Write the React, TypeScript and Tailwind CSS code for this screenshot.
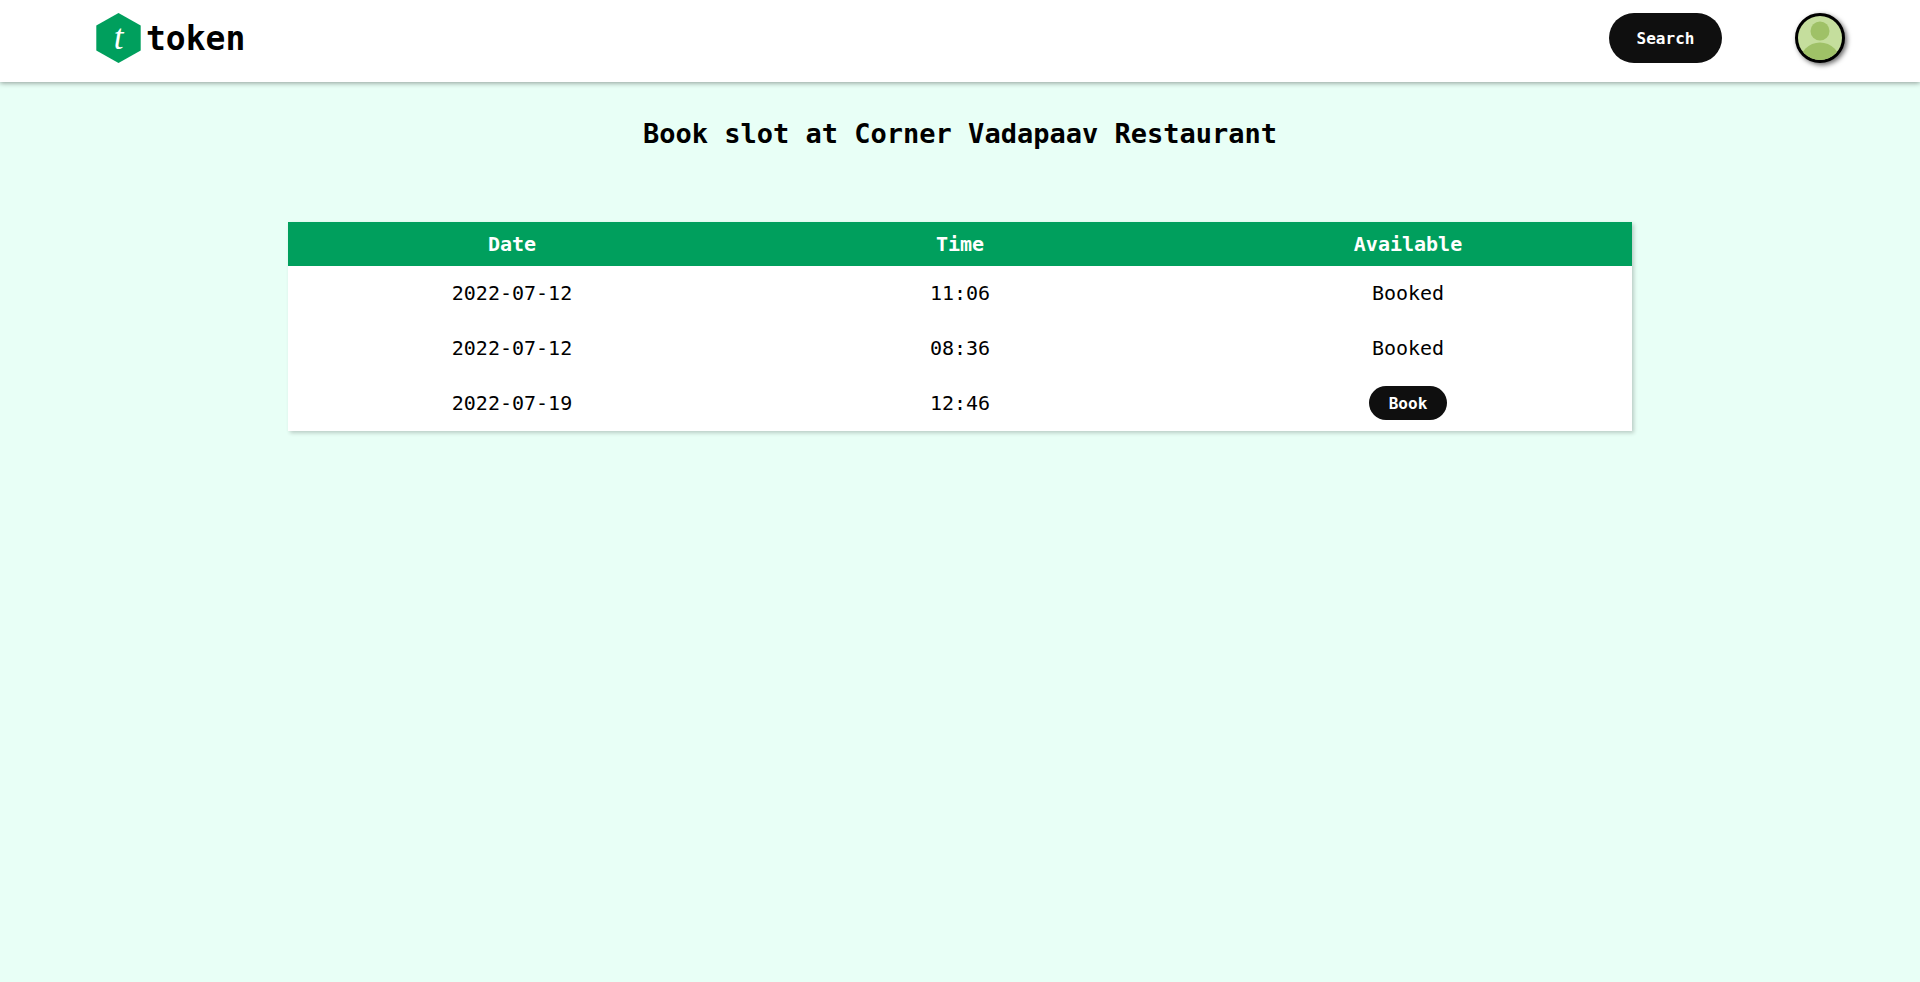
const slots = [
  { date: "2022-07-12", time: "11:06", available: false },
  { date: "2022-07-12", time: "08:36", available: false },
  { date: "2022-07-19", time: "12:46", available: true },
];

function Logo() {
  return (
    <a href="#" aria-label="token" className="flex items-center gap-1 text-black">
      <svg viewBox="0 0 46 50" className="h-[50px] w-[46px]" aria-hidden="true">
        <path d="M22.500 0 44.700 12.500v25L22.500 50 .3 37.500v-25Z" fill="#009f5d" />
        <text
          x="22.500"
          y="36"
          textAnchor="middle"
          fontSize="35"
          fontStyle="italic"
          fontFamily="Liberation Serif, serif"
          fill="#fff"
        >
          t
        </text>
      </svg>
      <span className="pt-0.5 text-[33px] leading-12 font-bold">token</span>
    </a>
  );
}

function Avatar() {
  return (
    <button
      type="button"
      aria-label="Profile"
      className="size-[50px] rounded-full border-3 border-black bg-black shadow-[2px_2px_5px_rgba(0,0,0,0.6)]"
    >
      <svg viewBox="0 0 44 44" className="size-full rounded-full" aria-hidden="true">
        <rect width="44" height="44" fill="#c5de9d" />
        <circle cx="22" cy="15" r="9.5" fill="#9fc167" />
        <circle cx="22" cy="47" r="20.5" fill="#9fc167" />
      </svg>
    </button>
  );
}

export default function App() {
  return (
    <div className="min-h-screen bg-[#e8fff6] font-['DejaVu_Sans_Mono',monospace] text-black">
      <header className="flex items-start justify-between bg-white pt-[13px] pr-[75px] pb-[19px] pl-24 shadow-[0_1px_5px_rgba(0,0,0,0.4)]">
        <Logo />
        <nav className="flex items-center gap-[73px]">
          <button type="button" className="h-[50px] w-[113px] rounded-full bg-[#0f0f0f] pt-0.5 text-base font-bold text-white">
            Search
          </button>
          <Avatar />
        </nav>
      </header>
      <main className="flex flex-col items-center pt-8">
        <h1 className="text-[27px] leading-10 font-bold">Book slot at Corner Vadapaav Restaurant</h1>
        <table className="mt-[68px] w-[70%] table-fixed bg-white text-center text-xl shadow-[2px_2px_4px_rgba(0,0,0,0.2)]">
          <thead className="bg-[#009f5d] text-white">
            <tr className="h-11">
              <th scope="col">Date</th>
              <th scope="col">Time</th>
              <th scope="col">Available</th>
            </tr>
          </thead>
          <tbody>
            {slots.map((slot) => (
              <tr key={`${slot.date} ${slot.time}`} className="h-[55px]">
                <td className="pb-0.5">{slot.date}</td>
                <td className="pb-0.5">{slot.time}</td>
                <td className="pb-0.5">
                  {slot.available ? (
                    <button type="button" className="mx-auto block h-[34px] w-[78px] rounded-full bg-[#0f0f0f] pt-0.5 text-base font-bold text-white">
                      Book
                    </button>
                  ) : (
                    "Booked"
                  )}
                </td>
              </tr>
            ))}
          </tbody>
        </table>
      </main>
    </div>
  );
}
